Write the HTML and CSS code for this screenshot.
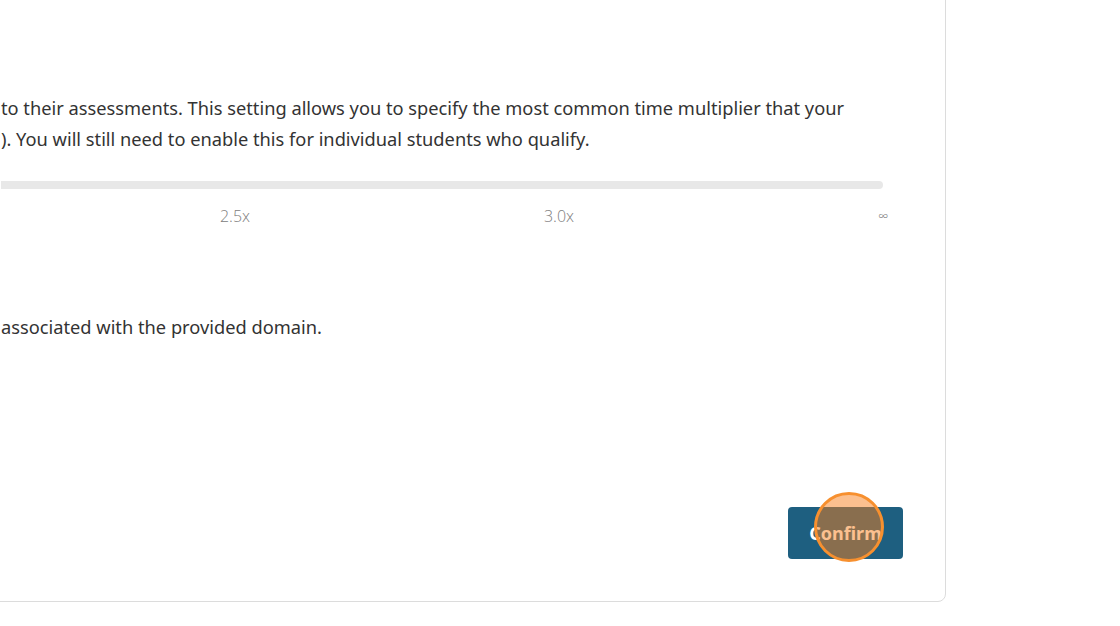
FILE: index.html
```html
<!DOCTYPE html>
<html>
<head>
<meta charset="utf-8">
<link rel="stylesheet" href="styles.css">
</head>
<body>
<div class="page">
  <div class="card">
    <div class="section">
      <p class="desc"><span class="line">to their assessments. This setting allows you to specify the most common time multiplier that your</span><span class="line">). You will still need to enable this for individual students who qualify.</span></p>
      <div class="slider">
        <div class="track"></div>
        <div class="ticks">
          <span class="tick">2.5x</span>
          <span class="tick">3.0x</span>
          <span class="tick inf">∞</span>
        </div>
      </div>
    </div>
    <div class="section second">
      <p class="desc"><span class="line">associated with the provided domain.</span></p>
    </div>
    <div class="actions">
      <button class="confirm">Confirm</button>
      <span class="click-marker"></span>
    </div>
  </div>
</div>
</body>
</html>
```
FILE: styles.css
```css
html, body {
  margin: 0;
  padding: 0;
  background: #ffffff;
  overflow: hidden;
  width: 1120px;
  height: 626px;
}
.page {
  width: 1120px;
  height: 626px;
  font-family: "Noto Sans", "Open Sans", sans-serif;
  color: #333333;
}
.card {
  margin-top: -10px;
  margin-left: -20px;
  width: 966px;
  height: 612px;
  box-sizing: border-box;
  border: 1px solid #dcdcdc;
  border-radius: 0 0 8px 0;
  background: #ffffff;
  padding: 101px 42px 42px 20px;
  display: flex;
  flex-direction: column;
}
.desc {
  margin: 0;
  font-size: 18.25px;
  line-height: 31px;
}
.line {
  display: block;
  white-space: nowrap;
}
.slider {
  margin-top: 27px;
  width: 882px;
}
.track {
  height: 8px;
  background: #e8e8e8;
  border-radius: 0 4px 4px 0;
}
.ticks {
  display: flex;
  margin-top: 17px;
  margin-left: 72px;
}
.tick {
  width: 324px;
  flex: none;
  text-align: center;
  font-family: "Open Sans", "Noto Sans", sans-serif;
  font-weight: 300;
  font-size: 16px;
  line-height: 20px;
  color: #808080;
}
.tick.inf {
  font-size: 14px;
}
.section.second {
  margin-top: 85px;
}
.actions {
  margin-top: auto;
  display: flex;
  justify-content: flex-end;
  position: relative;
}
.confirm {
  width: 115px;
  height: 52px;
  border: none;
  border-radius: 4px;
  background: #1e5f80;
  color: #ffffff;
  font-family: "Noto Sans", "Open Sans", sans-serif;
  font-weight: 700;
  font-size: 18px;
  padding: 0;
}
.click-marker {
  position: absolute;
  right: 19px;
  top: -15px;
  width: 70px;
  height: 70px;
  border-radius: 50%;
  background: rgba(249, 126, 26, 0.49);
  border: 3px solid #f7902f;
  box-sizing: border-box;
}
```
